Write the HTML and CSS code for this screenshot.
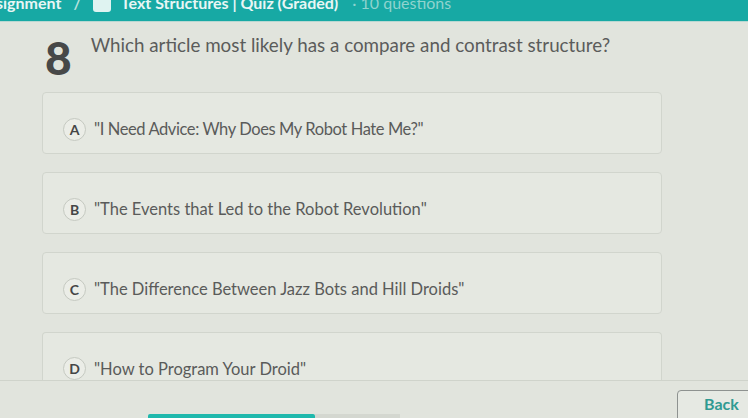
FILE: index.html
```html
<!DOCTYPE html>
<html>
<head>
<meta charset="utf-8">
<link rel="stylesheet" href="styles.css">
</head>
<body>
<div class="page">
  <header class="topbar">
    <div class="crumbs">
      <span>signment</span>
      <span class="sep">/</span>
      <span class="ico"></span>
      <span>Text Structures | Quiz (Graded)</span>
      <span class="faint">· 10 questions</span>
    </div>
  </header>
  <main class="quiz">
    <div class="question">
      <div class="num">8</div>
      <div class="qtext">Which article most likely has a compare and contrast structure?</div>
    </div>
    <div class="options">
      <div class="opt"><span class="letter">A</span><span class="otext narrow">"I Need Advice: Why Does My Robot Hate Me?"</span></div>
      <div class="opt"><span class="letter">B</span><span class="otext">"The Events that Led to the Robot Revolution"</span></div>
      <div class="opt"><span class="letter">C</span><span class="otext">"The Difference Between Jazz Bots and Hill Droids"</span></div>
      <div class="opt last"><span class="letter">D</span><span class="otext">"How to Program Your Droid"</span></div>
    </div>
  </main>
  <footer class="foot">
    <div class="progress"><div class="fill"></div><div class="rest"></div></div>
    <button class="back">Back</button>
  </footer>
</div>
</body>
</html>
```
FILE: styles.css
```css
html, body {
  margin: 0;
  padding: 0;
  background: #e1e4dd;
  font-family: Lato, "Open Sans", sans-serif;
}
.page {
  width: 748px;
  height: 418px;
  overflow: hidden;
  display: flex;
  flex-direction: column;
}
.topbar {
  height: 21px;
  flex: none;
  background: #17a9a4;
  overflow: hidden;
  border-bottom: 1px solid #b9d8d2;
}
.crumbs {
  display: flex;
  align-items: center;
  gap: 10px;
  margin-top: -8px;
  margin-left: -4px;
  color: #e8f6f4;
  font-weight: 700;
  font-size: 16px;
  line-height: 22px;
}
.crumbs .sep { color: #b6e2de; margin: 0 2px; }
.crumbs .ico {
  width: 18px;
  height: 18px;
  border-radius: 3px;
  background: #dff3f1;
}
.crumbs .faint { color: #8fd3ce; font-weight: 400; margin-left: 4px; }
.quiz {
  flex: 1;
  display: flex;
  flex-direction: column;
  padding: 11px 0 0 42px;
  overflow: hidden;
}
.question {
  display: flex;
  align-items: flex-start;
  gap: 19px;
}
.num {
  font-size: 46px;
  font-weight: 900;
  color: #474848;
  line-height: 40px;
  padding-left: 3px;
  margin-top: 5px;
}
.qtext {
  font-size: 18.8px;
  color: #5b5c5b;
  line-height: 24px;
}
.options {
  display: flex;
  flex-direction: column;
  gap: 18px;
  margin-top: 14px;
  width: 620px;
}
.opt {
  height: 62px;
  flex: none;
  box-sizing: border-box;
  border: 1px solid #d1d5cd;
  border-radius: 4px;
  background: #e5e8e1;
  display: flex;
  align-items: center;
  padding: 12px 0 0 20px;
  gap: 8px;
}
.opt.last { height: 48px; border-bottom: none; border-radius: 4px 4px 0 0; padding-top: 24px; }
.letter {
  width: 21px;
  height: 21px;
  flex: none;
  border-radius: 50%;
  border: 1px solid #c5c9c1;
  background: #ebede7;
  display: flex;
  align-items: center;
  justify-content: center;
  font-size: 14px;
  font-weight: 700;
  color: #454646;
}
.otext {
  font-size: 16.5px;
  color: #5a5b5a;
}
.otext.narrow { letter-spacing: -0.4px; }
.foot {
  height: 37px;
  flex: none;
  border-top: 1px solid #cfd3cb;
  position: relative;
}
.progress {
  position: absolute;
  left: 148px;
  bottom: 0;
  display: flex;
  height: 4px;
}
.progress .fill { width: 167px; background: #1fb8ac; border-radius: 2px 2px 0 0; }
.progress .rest { width: 85px; background: #d4d7d0; }
.back {
  position: absolute;
  right: -10px;
  top: 9px;
  width: 81px;
  height: 34px;
  border: 1px solid #8e9290;
  border-radius: 4px;
  background: #e6e9e3;
  color: #2f9a92;
  font-family: Lato, sans-serif;
  font-weight: 700;
  font-size: 16px;
  text-align: left;
  padding-left: 26px;
  padding-bottom: 8px;
}
```
